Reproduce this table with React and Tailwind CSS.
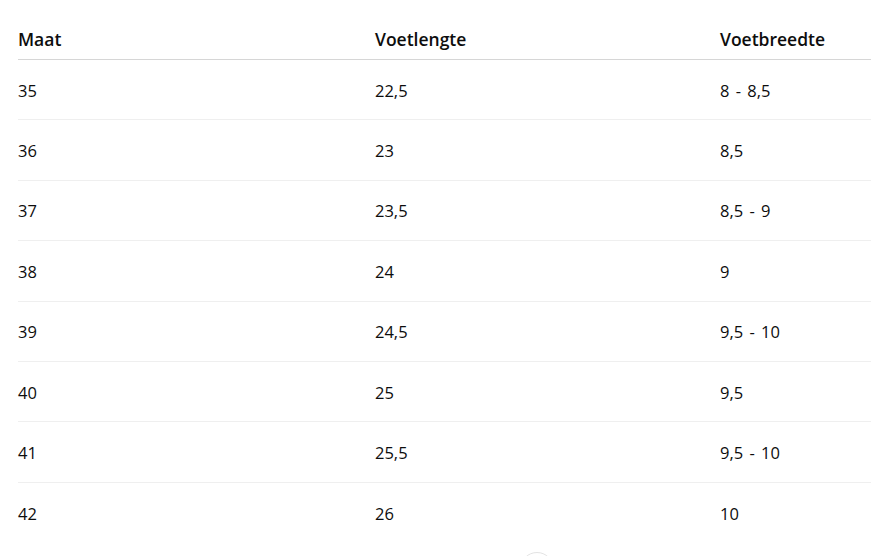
const rows = [
  ['35', '22,5', '8 - 8,5'],
  ['36', '23', '8,5'],
  ['37', '23,5', '8,5 - 9'],
  ['38', '24', '9'],
  ['39', '24,5', '9,5 - 10'],
  ['40', '25', '9,5'],
  ['41', '25,5', '9,5 - 10'],
  ['42', '26', '10'],
]

export default function App() {
  return (
    <div className="relative h-[556px] w-full overflow-hidden bg-white font-['Open_Sans',sans-serif] text-[16.5px] text-[#0d0d0d]">
      <div className="pl-[18px] pt-[27px]">
        <div className="grid grid-cols-[357px_345px_1fr] border-b border-[#d6d6d6] pb-2 text-[17.5px] font-semibold leading-6">
          <div>Maat</div>
          <div>Voetlengte</div>
          <div>Voetbreedte</div>
        </div>
        {rows.map((r, i) => (
          <div
            key={r[0]}
            className={
              'grid h-[60.4px] grid-cols-[357px_345px_1fr] items-center pt-[2px] leading-6 ' +
              (i < rows.length - 1 ? 'border-b border-[#efefef]' : '')
            }
          >
            <div>{r[0]}</div>
            <div>{r[1]}</div>
            <div className="[word-spacing:2px]">{r[2]}</div>
          </div>
        ))}
      </div>
      <div className="absolute left-[520px] top-[552px] h-[34px] w-[34px] rounded-full border border-[#e3e3e3] bg-white" />
    </div>
  )
}
